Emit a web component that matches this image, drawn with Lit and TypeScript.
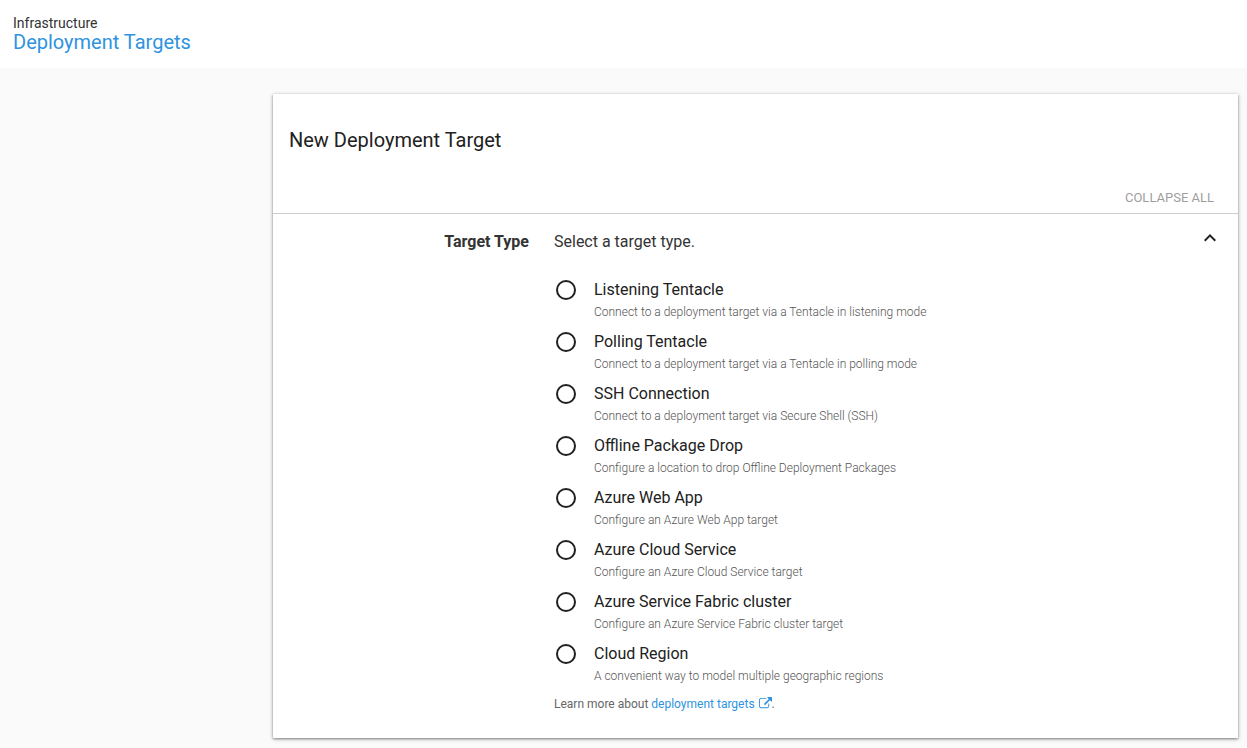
import { LitElement, css, html } from "lit";
import { customElement, state } from "lit/decorators.js";

interface TargetType {
  id: string;
  name: string;
  description: string;
}

const TARGET_TYPES: TargetType[] = [
  { id: "listening", name: "Listening Tentacle", description: "Connect to a deployment target via a Tentacle in listening mode" },
  { id: "polling", name: "Polling Tentacle", description: "Connect to a deployment target via a Tentacle in polling mode" },
  { id: "ssh", name: "SSH Connection", description: "Connect to a deployment target via Secure Shell (SSH)" },
  { id: "offline", name: "Offline Package Drop", description: "Configure a location to drop Offline Deployment Packages" },
  { id: "azure-web", name: "Azure Web App", description: "Configure an Azure Web App target" },
  { id: "azure-cloud", name: "Azure Cloud Service", description: "Configure an Azure Cloud Service target" },
  { id: "azure-fabric", name: "Azure Service Fabric cluster", description: "Configure an Azure Service Fabric cluster target" },
  { id: "cloud-region", name: "Cloud Region", description: "A convenient way to model multiple geographic regions" },
];

@customElement("app-root")
export class AppRoot extends LitElement {
  static styles = css`
    :host {
      display: flex;
      flex-direction: column;
      min-height: 100vh;
      box-sizing: border-box;
      background: #fafafa;
      color: #333;
      font-family: Roboto, sans-serif;
      font-size: 16px;
      line-height: 24px;
    }
    *,
    *::before {
      box-sizing: border-box;
    }
    a {
      color: #2f93e0;
      text-decoration: none;
    }
    button {
      border: 0;
      padding: 0;
      background: none;
      font-family: inherit;
      cursor: pointer;
    }
    .top {
      background: #fff;
      padding: 14px 13px 16px;
    }
    .area {
      font-size: 14px;
      line-height: 18px;
    }
    .section {
      margin: 0;
      font-size: 20px;
      font-weight: 400;
      line-height: 20px;
    }
    .page {
      display: grid;
      grid-template-columns: 256px minmax(0, 1fr);
      column-gap: 17px;
      padding: 26px 9px 8px 0;
    }
    .card {
      grid-column: 2;
      background: #fff;
      box-shadow: 0 1px 4px rgba(0, 0, 0, 0.3), 0 1px 2px rgba(0, 0, 0, 0.3);
    }
    .card-head {
      padding: 32px 16px 0;
    }
    .card-title {
      margin: 0;
      color: #212121;
      font-size: 20px;
      font-weight: 400;
      line-height: 28px;
    }
    .toolbar {
      display: flex;
      justify-content: flex-end;
      padding: 32px 24px 4px;
      border-bottom: 1px solid #ccc;
    }
    .collapse {
      color: #9e9e9e;
      font-size: 13px;
      line-height: 23px;
    }
    .group {
      display: grid;
      grid-template-columns: 256px minmax(0, 1fr) 24px;
      column-gap: 25px;
      padding: 16px 16px 24px 0;
    }
    .group-label {
      margin: 0;
      font-size: 16px;
      font-weight: 700;
      line-height: 24px;
      text-align: right;
    }
    .toggle {
      height: 16px;
      line-height: 0;
    }
    .chevron {
      width: 24px;
      height: 24px;
      fill: #212121;
      margin-top: -4px;
    }
    .choices {
      margin: 0;
      padding: 0;
      border: 0;
      min-width: 0;
    }
    .prompt {
      padding: 0 0 24px;
    }
    .choice {
      display: grid;
      grid-template-columns: 24px minmax(0, 1fr);
      column-gap: 16px;
      height: 52px;
      cursor: pointer;
    }
    .radio {
      appearance: none;
      width: 20px;
      height: 20px;
      margin: 2px;
      border: 2px solid #212121;
      border-radius: 50%;
      background: #fff;
    }
    .radio:checked {
      border-color: #2f93e0;
      background: radial-gradient(#2f93e0 5px, #fff 6px);
    }
    .name {
      display: block;
      color: #212121;
    }
    .note {
      display: block;
      color: #555;
      font-size: 12px;
      font-weight: 300;
      line-height: 20px;
    }
    .learn {
      margin: 0;
      color: #666;
      font-size: 12px;
      line-height: 20px;
    }
    .external {
      width: 13px;
      height: 13px;
      margin-left: 1px;
      vertical-align: -2px;
      fill: #2f93e0;
    }
  `;

  @state() private open = true;
  @state() private selected = "";

  private toggle() {
    this.open = !this.open;
  }

  private renderChoice(type: TargetType) {
    return html`
      <label class="choice">
        <input
          class="radio"
          type="radio"
          name="target-type"
          .checked=${this.selected === type.id}
          @change=${() => (this.selected = type.id)}
        />
        <span>
          <span class="name">${type.name}</span>
          <span class="note">${type.description}</span>
        </span>
      </label>
    `;
  }

  render() {
    return html`
      <header class="top">
        <div class="area">Infrastructure</div>
        <h1 class="section"><a href="#targets">Deployment Targets</a></h1>
      </header>
      <main class="page">
        <section class="card">
          <div class="card-head">
            <h2 class="card-title">New Deployment Target</h2>
          </div>
          <div class="toolbar">
            <button class="collapse" type="button" @click=${this.toggle}>
              ${this.open ? "COLLAPSE ALL" : "EXPAND ALL"}
            </button>
          </div>
          <div class="group">
            <h3 class="group-label" id="type-label">Target Type</h3>
            <fieldset class="choices" aria-labelledby="type-label">
              <div class="prompt">Select a target type.</div>
              ${this.open
                ? html`
                    ${TARGET_TYPES.map((type) => this.renderChoice(type))}
                    <p class="learn">
                      Learn more about
                      <a href="#docs"
                        >deployment targets
                        <svg class="external" viewBox="0 0 1792 1792" aria-hidden="true">
                          <path
                            d="M1408 928v320q0 119-84.500 203.500T1120 1536H288q-119 0-203.500-84.500T0 1248V416q0-119 84.500-203.500T288 128h704q14 0 23 9t9 23v64q0 14-9 23t-23 9H288q-66 0-113 47t-47 113v832q0 66 47 113t113 47h832q66 0 113-47t47-113V928q0-14 9-23t23-9h64q14 0 23 9t9 23zM1792 64v512q0 26-19 45t-45 19-45-19l-176-176-652 652q-10 10-23 10t-23-10L695 983q-10-10-10-23t10-23l652-652-176-176q-19-19-19-45t19-45 45-19h512q26 0 45 19t19 45z"
                          /></svg></a
                      >.
                    </p>
                  `
                : ""}
            </fieldset>
            <button
              class="toggle"
              type="button"
              aria-label="Toggle target type"
              aria-expanded=${this.open ? "true" : "false"}
              @click=${this.toggle}
            >
              <svg class="chevron" viewBox="0 0 24 24" aria-hidden="true">
                <path d="M12 8l-6 6 1.410 1.410L12 10.830l4.590 4.580L18 14z" />
              </svg>
            </button>
          </div>
        </section>
      </main>
    `;
  }
}
